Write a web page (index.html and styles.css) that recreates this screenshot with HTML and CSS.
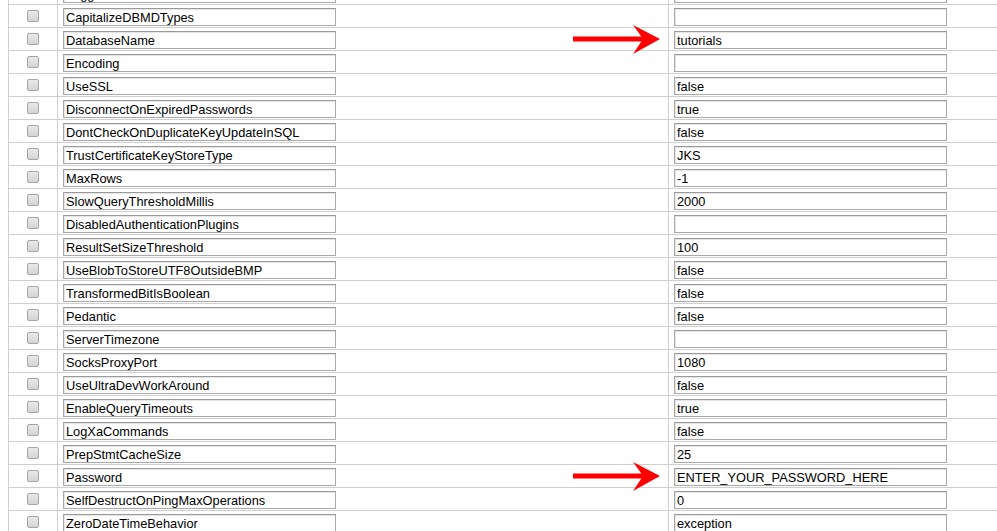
FILE: index.html
```html
<!DOCTYPE html>
<html lang="en">
<head>
    <meta charset="UTF-8">
    <title>Connection Properties</title>
    <link rel="stylesheet" href="styles.css">
</head>
<body>

    <div class="page">
        <table class="props">
            <colgroup>
                <col class="col-check">
                <col class="col-name">
                <col class="col-value">
            </colgroup>
            <tbody>
                <tr><td class="check"><input type="checkbox"></td><td><input type="text" value="Logger"></td><td><input type="text" value=""></td></tr>
                <tr><td class="check"><input type="checkbox"></td><td><input type="text" value="CapitalizeDBMDTypes"></td><td><input type="text" value=""></td></tr>
                <tr>
                    <td class="check"><input type="checkbox"></td>
                    <td class="mark">
                        <input type="text" value="DatabaseName">
                        <svg class="arrow" width="95" height="31" viewBox="0 0 95 31"><rect x="6" y="12.5" width="72" height="5" fill="#f00"/><path d="M66 1 L93 15 L66 30 Q72 21 76 15 Q72 9 66 1 Z" fill="#f00"/></svg>
                    </td>
                    <td><input type="text" value="tutorials"></td>
                </tr>
                <tr><td class="check"><input type="checkbox"></td><td><input type="text" value="Encoding"></td><td><input type="text" value=""></td></tr>
                <tr><td class="check"><input type="checkbox"></td><td><input type="text" value="UseSSL"></td><td><input type="text" value="false"></td></tr>
                <tr><td class="check"><input type="checkbox"></td><td><input type="text" value="DisconnectOnExpiredPasswords"></td><td><input type="text" value="true"></td></tr>
                <tr><td class="check"><input type="checkbox"></td><td><input type="text" value="DontCheckOnDuplicateKeyUpdateInSQL"></td><td><input type="text" value="false"></td></tr>
                <tr><td class="check"><input type="checkbox"></td><td><input type="text" value="TrustCertificateKeyStoreType"></td><td><input type="text" value="JKS"></td></tr>
                <tr><td class="check"><input type="checkbox"></td><td><input type="text" value="MaxRows"></td><td><input type="text" value="-1"></td></tr>
                <tr><td class="check"><input type="checkbox"></td><td><input type="text" value="SlowQueryThresholdMillis"></td><td><input type="text" value="2000"></td></tr>
                <tr><td class="check"><input type="checkbox"></td><td><input type="text" value="DisabledAuthenticationPlugins"></td><td><input type="text" value=""></td></tr>
                <tr><td class="check"><input type="checkbox"></td><td><input type="text" value="ResultSetSizeThreshold"></td><td><input type="text" value="100"></td></tr>
                <tr><td class="check"><input type="checkbox"></td><td><input type="text" value="UseBlobToStoreUTF8OutsideBMP"></td><td><input type="text" value="false"></td></tr>
                <tr><td class="check"><input type="checkbox"></td><td><input type="text" value="TransformedBitIsBoolean"></td><td><input type="text" value="false"></td></tr>
                <tr><td class="check"><input type="checkbox"></td><td><input type="text" value="Pedantic"></td><td><input type="text" value="false"></td></tr>
                <tr><td class="check"><input type="checkbox"></td><td><input type="text" value="ServerTimezone"></td><td><input type="text" value=""></td></tr>
                <tr><td class="check"><input type="checkbox"></td><td><input type="text" value="SocksProxyPort"></td><td><input type="text" value="1080"></td></tr>
                <tr><td class="check"><input type="checkbox"></td><td><input type="text" value="UseUltraDevWorkAround"></td><td><input type="text" value="false"></td></tr>
                <tr><td class="check"><input type="checkbox"></td><td><input type="text" value="EnableQueryTimeouts"></td><td><input type="text" value="true"></td></tr>
                <tr><td class="check"><input type="checkbox"></td><td><input type="text" value="LogXaCommands"></td><td><input type="text" value="false"></td></tr>
                <tr><td class="check"><input type="checkbox"></td><td><input type="text" value="PrepStmtCacheSize"></td><td><input type="text" value="25"></td></tr>
                <tr>
                    <td class="check"><input type="checkbox"></td>
                    <td class="mark">
                        <input type="text" value="Password">
                        <svg class="arrow" width="95" height="31" viewBox="0 0 95 31"><rect x="6" y="12.5" width="72" height="5" fill="#f00"/><path d="M66 1 L93 15 L66 30 Q72 21 76 15 Q72 9 66 1 Z" fill="#f00"/></svg>
                    </td>
                    <td><input type="text" value="ENTER_YOUR_PASSWORD_HERE"></td>
                </tr>
                <tr><td class="check"><input type="checkbox"></td><td><input type="text" value="SelfDestructOnPingMaxOperations"></td><td><input type="text" value="0"></td></tr>
                <tr><td class="check"><input type="checkbox"></td><td><input type="text" value="ZeroDateTimeBehavior"></td><td><input type="text" value="exception"></td></tr>
            </tbody>
        </table>
    </div>

</body>
</html>
```

FILE: styles.css
```css
html, body {
    margin: 0;
    padding: 0;
    overflow: hidden;
    background-color: white;
}

body {
    font-family: "Liberation Sans", Arial, sans-serif;
    font-size: 12.8px;
    color: #000;
}

.page {
    padding-left: 8px;
}

.props {
    border-collapse: collapse;
    table-layout: fixed;
    width: 989px;
    margin-top: -19px;
}

.col-check {
    width: 49px;
}

.col-name {
    width: 611px;
}

.props td {
    border: 1px solid #cfcfcf;
    padding: 3px 5px 1px 5px;
    height: 18px;
    vertical-align: top;
}

.props td:last-child {
    border-right: none;
}

.props td.check {
    text-align: center;
    padding-top: 5px;
    padding-bottom: 0;
    height: 16px;
}

.props td.mark {
    position: relative;
}

.props input[type="text"] {
    display: block;
    width: 273px;
    height: 18px;
    box-sizing: border-box;
    margin: 0;
    padding: 1px 2px 0 2px;
    font-family: "Liberation Sans", Arial, sans-serif;
    font-size: 12.8px;
    color: #000;
    background-color: white;
    border: 1px solid #a9a9a9;
    border-top-color: #9a9a9a;
    box-shadow: inset 1px 1px 1px #e4e4e4;
    outline: none;
}

.props input[type="checkbox"] {
    -webkit-appearance: none;
    appearance: none;
    display: block;
    width: 12px;
    height: 12px;
    margin: 0 auto;
    border: 1px solid #a6a6a6;
    border-radius: 2px;
    background: linear-gradient(#e9e9e9, #d4d4d4);
}

.arrow {
    position: absolute;
    top: -4px;
    right: 6px;
}
```
